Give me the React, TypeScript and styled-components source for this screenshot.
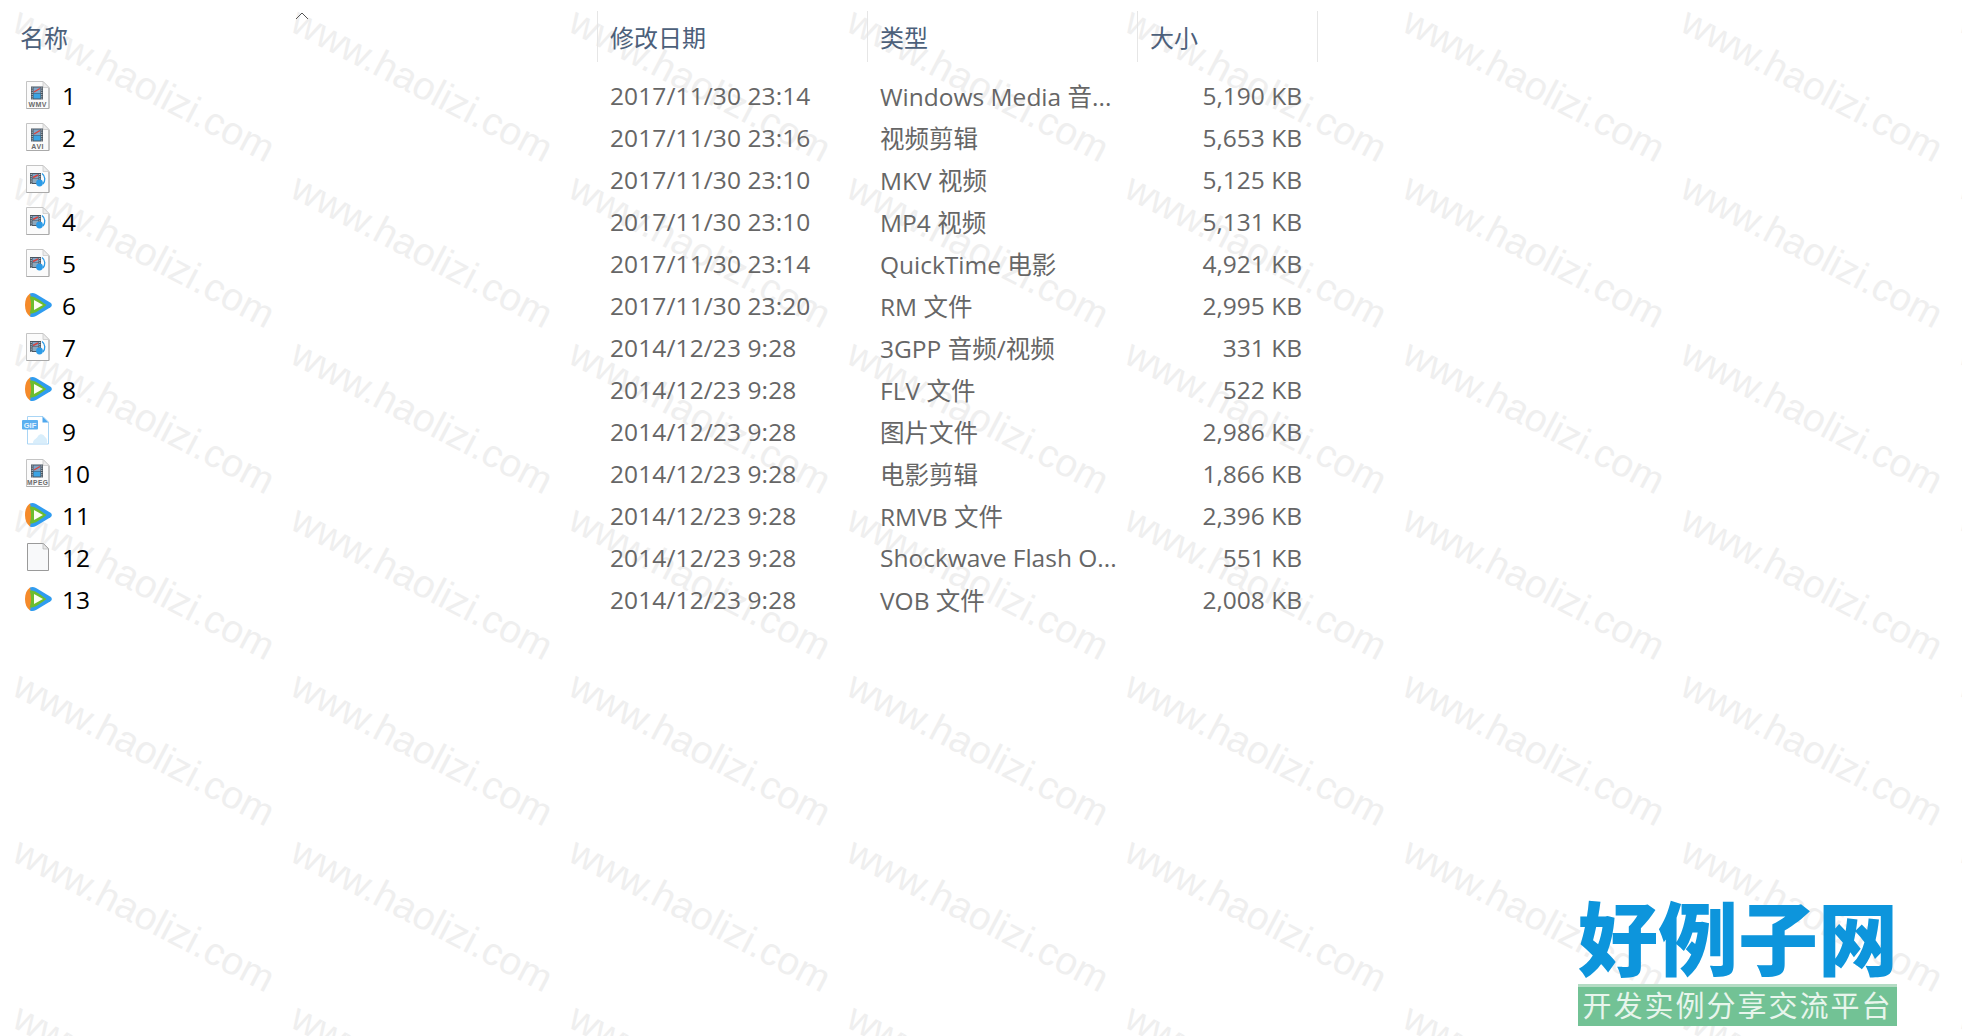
import React from 'react';
import styled, { createGlobalStyle } from 'styled-components';

type IconKind = 'wmv' | 'avi' | 'mpeg' | 'media' | 'play' | 'gif' | 'blank';

interface FileRow {
    name: string;
    date: string;
    type: string;
    size: string;
    icon: IconKind;
}

const files: FileRow[] = [
    { name: '1', date: '2017/11/30 23:14', type: 'Windows Media 音...', size: '5,190 KB', icon: 'wmv' },
    { name: '2', date: '2017/11/30 23:16', type: '视频剪辑', size: '5,653 KB', icon: 'avi' },
    { name: '3', date: '2017/11/30 23:10', type: 'MKV 视频', size: '5,125 KB', icon: 'media' },
    { name: '4', date: '2017/11/30 23:10', type: 'MP4 视频', size: '5,131 KB', icon: 'media' },
    { name: '5', date: '2017/11/30 23:14', type: 'QuickTime 电影', size: '4,921 KB', icon: 'media' },
    { name: '6', date: '2017/11/30 23:20', type: 'RM 文件', size: '2,995 KB', icon: 'play' },
    { name: '7', date: '2014/12/23 9:28', type: '3GPP 音频/视频', size: '331 KB', icon: 'media' },
    { name: '8', date: '2014/12/23 9:28', type: 'FLV 文件', size: '522 KB', icon: 'play' },
    { name: '9', date: '2014/12/23 9:28', type: '图片文件', size: '2,986 KB', icon: 'gif' },
    { name: '10', date: '2014/12/23 9:28', type: '电影剪辑', size: '1,866 KB', icon: 'mpeg' },
    { name: '11', date: '2014/12/23 9:28', type: 'RMVB 文件', size: '2,396 KB', icon: 'play' },
    { name: '12', date: '2014/12/23 9:28', type: 'Shockwave Flash O...', size: '551 KB', icon: 'blank' },
    { name: '13', date: '2014/12/23 9:28', type: 'VOB 文件', size: '2,008 KB', icon: 'play' },
];

const GlobalStyle = createGlobalStyle`
    html, body {
        margin: 0;
        padding: 0;
        background: #fff;
    }
`;

const Page = styled.div`
    position: relative;
    width: 1962px;
    height: 1036px;
    overflow: hidden;
    padding-top: 11px;
    box-sizing: border-box;
    background: #fff;
    font-family: 'Open Sans', 'Noto Sans CJK SC', sans-serif;
    font-size: 24.5px;
`;

const Watermarks = styled.div`
    position: absolute;
    top: 2px;
    left: 5px;
    display: grid;
    grid-template-columns: repeat(8, 278px);
    grid-auto-rows: 166px;
`;

const Mark = styled.span`
    display: flex;
    align-items: center;
    justify-content: center;
    height: 166px;
    font-family: 'Liberation Sans', sans-serif;
    font-size: 39px;
    white-space: nowrap;
    color: #efefef;
    transform: rotate(27.5deg);
`;

const Table = styled.div`
    position: relative;
    width: 1318px;
`;

const HeaderRow = styled.div`
    display: grid;
    grid-template-columns: 597px 270px 270px 181px;
    height: 51px;
    margin-bottom: 12px;
    border-right: 1px solid #e6e6e6;
    font-size: 24px;
`;

const HeaderCell = styled.div<{ $first?: boolean }>`
    display: flex;
    align-items: center;
    padding-left: ${(p) => (p.$first ? '20px' : '12px')};
    border-left: ${(p) => (p.$first ? 'none' : '1px solid #e6e6e6')};
    color: #4c607a;
`;

const SortCaret = styled.svg`
    position: absolute;
    top: 1px;
    left: 295px;
    width: 14px;
    height: 8px;
`;

const Row = styled.div`
    display: grid;
    grid-template-columns: 597px 270px 270px 181px;
    height: 42px;
    align-items: center;
`;

const NameCell = styled.div`
    display: flex;
    align-items: center;
    gap: 8px;
    padding-left: 24px;
    color: #000;
`;

const IconBox = styled.svg`
    width: 30px;
    height: 30px;
    flex-shrink: 0;
    overflow: visible;
`;

const DateCell = styled.div`
    padding-left: 13px;
    color: #666;
    letter-spacing: 0.1px;
    white-space: nowrap;
`;

const TypeCell = styled.div`
    padding-left: 13px;
    color: #666;
    white-space: nowrap;
`;

const SizeCell = styled.div`
    padding-right: 16px;
    text-align: right;
    color: #666;
    white-space: nowrap;
`;

const Logo = styled.div`
    position: absolute;
    right: 65px;
    bottom: 10px;
    width: 319px;
    display: flex;
    flex-direction: column;
    gap: 11px;
`;

const LogoTitle = styled.div`
    height: 78px;
    font-family: 'Noto Sans CJK SC', sans-serif;
    font-weight: 900;
    font-size: 80px;
    line-height: 78px;
    color: #0d95dc;
    white-space: nowrap;
`;

const LogoBar = styled.div`
    height: 42px;
    line-height: 34px;
    box-sizing: border-box;
    border-top: 3px solid #b4dcc4;
    background: #72c295;
    color: #e8f5ec;
    font-family: 'Noto Sans CJK SC', sans-serif;
    font-size: 29px;
    letter-spacing: 2px;
    text-align: center;
    white-space: nowrap;
`;

const Film: React.FC<{ x: number; y: number; w: number; h: number; low: string }> = ({ x, y, w, h, low }) => (
    <g>
        <rect x={x} y={y} width={w} height={h} fill="#4a5560" />
        <rect x={x + 2.5} y={y + 1} width={w - 5} height={h / 2 - 1} fill="#7fa6c8" />
        <rect x={x + 2.5} y={y + h / 2 + 0.5} width={w - 5} height={h / 2 - 1.5} fill={low} />
        <path d={`M${x + 3} ${y + h / 2 - 1} L${x + w - 3} ${y + 2}`} stroke="#d8433c" strokeWidth="1.4" />
        <path
            d={`M${x + 1.2} ${y + 1}V${y + h}M${x + w - 1.2} ${y + 1}V${y + h}`}
            stroke="#dfe4e8"
            strokeWidth="1"
            strokeDasharray="1 1.2"
        />
    </g>
);

const DocShape: React.FC = () => (
    <g>
        <path d="M2.5 1.5H19L25 7.5V28.5H2.5Z" fill="#fbfbfb" stroke="#c4c4c4" />
        <path d="M19 1.5V7.5H25Z" fill="#ececec" stroke="#c4c4c4" strokeWidth="0.7" />
        <path d="M2.5 28.5H25V8" fill="none" stroke="#aaa" />
    </g>
);

const FileIcon: React.FC<{ kind: IconKind }> = ({ kind }) => {
    if (kind === 'play') {
        return (
            <IconBox viewBox="0 0 30 30">
                <path
                    d="M6 3.5C8 2.5 10 3 12 4L26.5 12.8C28.3 14 28.3 16 26.5 17.2L12 26C10 27 8 27.5 6 26.5Z"
                    fill="#2f9cf0"
                />
                <path d="M6 3.5C2.5 6 1 10 1 15C1 20 2.5 24 6 26.5C7.5 22 7.5 8 6 3.5Z" fill="#f58a2a" />
                <path d="M5.5 6.5C10 6 13 8 22.5 15C13 22 10 24 5.5 23.5C7.5 19 7.5 11 5.5 6.5Z" fill="#6cbd2e" />
                <path d="M10 10L19 15L10 20Z" fill="#fbfdf2" />
            </IconBox>
        );
    }
    if (kind === 'gif') {
        return (
            <IconBox viewBox="0 0 30 30">
                <path d="M3.5 0.5H19L24.5 6V28H3.5Z" fill="#fff" stroke="#a9d5f5" />
                <path d="M18.5 0.5V6.5H24.5Z" fill="#4fa8ee" />
                <path d="M9 27C9 23 13 23 14 20C16 17 20 18 21 21C23 22 23.5 25 23 27Z" fill="#d9eefb" />
                <rect x="-2" y="4" width="16" height="9.5" rx="1" fill="#5cb0f0" />
                <text x="6" y="11.5" fontFamily="Liberation Sans" fontSize="7.5" fontWeight="700" fill="#e8f4fe" textAnchor="middle">
                    GIF
                </text>
            </IconBox>
        );
    }
    if (kind === 'blank') {
        return (
            <IconBox viewBox="0 0 30 30">
                <path d="M3.5 1.5H19.5L24.5 6.5V28.5H3.5Z" fill="#f8f9fa" stroke="#9a9a9a" />
                <path d="M19 1.5V7H24.5Z" fill="#e6e6e6" stroke="#b5b5b5" strokeWidth="0.7" />
            </IconBox>
        );
    }
    if (kind === 'media') {
        return (
            <IconBox viewBox="0 0 30 30">
                <DocShape />
                <Film x={6} y={9} w={11} h={11} low="#8fa8bc" />
                <circle cx="15.5" cy="19" r="3.4" fill="#2a9ae6" />
                <path d="M18 9.5C21.5 12 21.5 17 19 20" fill="none" stroke="#2a9ae6" strokeWidth="1.3" />
            </IconBox>
        );
    }
    return (
        <IconBox viewBox="0 0 30 30">
            <DocShape />
            <Film x={7} y={6.5} w={12} h={13} low="#3ba4e4" />
            <text
                x="13.7"
                y="26.5"
                fontFamily="Liberation Sans"
                fontSize={kind === 'mpeg' ? 6.6 : 7}
                fontWeight="700"
                letterSpacing="0.5"
                fill="#6a6a6a"
                textAnchor="middle"
            >
                {kind.toUpperCase()}
            </text>
        </IconBox>
    );
};

const App: React.FC = () => {
    return (
        <Page>
            <GlobalStyle />
            <Watermarks>
                {Array.from({ length: 64 }).map((_, i) => (
                    <Mark key={i}>www.haolizi.com</Mark>
                ))}
            </Watermarks>
            <Table>
                <SortCaret viewBox="0 0 14 8">
                    <path d="M1 7L7 1L13 7" fill="none" stroke="#555" strokeWidth="1" />
                </SortCaret>
                <HeaderRow>
                    <HeaderCell $first>名称</HeaderCell>
                    <HeaderCell>修改日期</HeaderCell>
                    <HeaderCell>类型</HeaderCell>
                    <HeaderCell>大小</HeaderCell>
                </HeaderRow>
                {files.map((f) => (
                    <Row key={f.name}>
                        <NameCell>
                            <FileIcon kind={f.icon} />
                            {f.name}
                        </NameCell>
                        <DateCell>{f.date}</DateCell>
                        <TypeCell>{f.type}</TypeCell>
                        <SizeCell>{f.size}</SizeCell>
                    </Row>
                ))}
            </Table>
            <Logo>
                <LogoTitle>好例子网</LogoTitle>
                <LogoBar>开发实例分享交流平台</LogoBar>
            </Logo>
        </Page>
    );
};

export default App;
